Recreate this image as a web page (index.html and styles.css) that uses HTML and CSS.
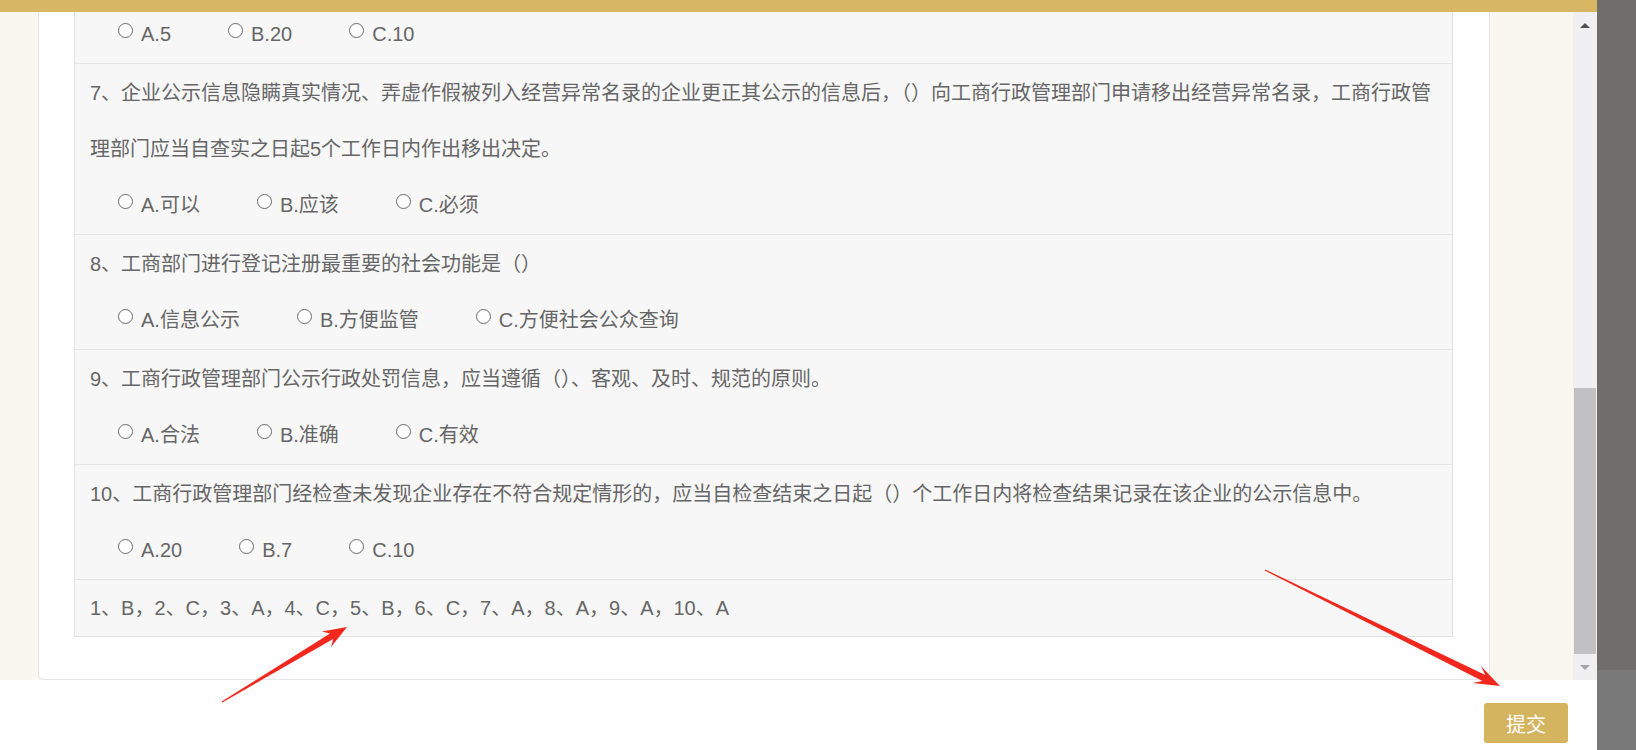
FILE: index.html
```html
<!DOCTYPE html>
<html lang="zh-CN">
<head>
    <meta charset="UTF-8">
    <meta name="viewport" content="width=device-width, initial-scale=1.0">
    <title>在线答题 - 提交</title>
    <link rel="stylesheet" href="styles.css">
</head>
<body>
    <div class="page">
        <div class="dialog">
            <div class="dialog-top"></div>

            <div class="dialog-body">
                <div class="scroll-view">
                    <div class="paper">
                        <div class="question-table">
                            <div class="q-row">
                                <div class="q-options">
                                    <label class="q-option"><input type="radio" name="q6">A.5</label><label class="q-option"><input type="radio" name="q6">B.20</label><label class="q-option"><input type="radio" name="q6">C.10</label>
                                </div>
                            </div>

                            <div class="q-row">
                                <p class="q-stem">7、企业公示信息隐瞒真实情况、弄虚作假被列入经营异常名录的企业更正其公示的信息后，（）向工商行政管理部门申请移出经营异常名录，工商行政管理部门应当自查实之日起5个工作日内作出移出决定。</p>
                                <div class="q-options">
                                    <label class="q-option"><input type="radio" name="q7">A.可以</label><label class="q-option"><input type="radio" name="q7">B.应该</label><label class="q-option"><input type="radio" name="q7">C.必须</label>
                                </div>
                            </div>

                            <div class="q-row">
                                <p class="q-stem">8、工商部门进行登记注册最重要的社会功能是（）</p>
                                <div class="q-options">
                                    <label class="q-option"><input type="radio" name="q8">A.信息公示</label><label class="q-option"><input type="radio" name="q8">B.方便监管</label><label class="q-option"><input type="radio" name="q8">C.方便社会公众查询</label>
                                </div>
                            </div>

                            <div class="q-row">
                                <p class="q-stem">9、工商行政管理部门公示行政处罚信息，应当遵循（）、客观、及时、规范的原则。</p>
                                <div class="q-options">
                                    <label class="q-option"><input type="radio" name="q9">A.合法</label><label class="q-option"><input type="radio" name="q9">B.准确</label><label class="q-option"><input type="radio" name="q9">C.有效</label>
                                </div>
                            </div>

                            <div class="q-row">
                                <p class="q-stem">10、工商行政管理部门经检查未发现企业存在不符合规定情形的，应当自检查结束之日起（）个工作日内将检查结果记录在该企业的公示信息中。</p>
                                <div class="q-options">
                                    <label class="q-option"><input type="radio" name="q10">A.20</label><label class="q-option"><input type="radio" name="q10">B.7</label><label class="q-option"><input type="radio" name="q10">C.10</label>
                                </div>
                            </div>

                            <div class="q-row answer-row">1、B，2、C，3、A，4、C，5、B，6、C，7、A，8、A，9、A，10、A</div>
                        </div>
                    </div>
                </div>

                <div class="scrollbar">
                    <span class="scroll-arrow up"></span>
                    <div class="scroll-track">
                        <div class="scroll-thumb"></div>
                    </div>
                    <span class="scroll-arrow down"></span>
                </div>
            </div>

            <div class="dialog-footer">
                <button type="button" class="submit-button">提交</button>
            </div>
        </div>

        <div class="backdrop-edge">
            <div class="edge-top"></div>
            <div class="edge-bottom"></div>
        </div>

        <!-- 标注箭头 -->
        <svg class="annotations" width="1636" height="750" viewBox="0 0 1636 750">
            <polygon points="222.3,702.5 333.2,639 331,647 347,627 321.8,631.6 330,633.6 221.7,701.5" fill="#f2281e"/>
            <polygon points="1264.7,570.5 1482.5,680.9 1472.5,683 1500,686 1480.9,666 1485.3,675.1 1265.3,569.5" fill="#f2281e"/>
        </svg>
    </div>
</body>
</html>
```

FILE: styles.css
```css
* {
    margin: 0;
    padding: 0;
    box-sizing: border-box;
}

body {
    font-family: "Liberation Sans", "Noto Sans CJK SC", sans-serif;
    background-color: #6f6e6a;
    width: 1636px;
    height: 750px;
    overflow: hidden;
}

.page {
    position: relative;
    display: flex;
    width: 1636px;
    height: 750px;
}

.dialog {
    width: 1597px;
    height: 750px;
    display: flex;
    flex-direction: column;
    background-color: white;
}

.dialog-top {
    height: 12px;
    background-color: #d7b763;
}

.dialog-body {
    height: 668px;
    display: flex;
}

.scroll-view {
    flex: 1;
    display: flex;
    flex-direction: column;
    justify-content: flex-end;
    overflow: hidden;
    background-color: #faf7f0;
    padding: 0 83px 0 38px;
}

.paper {
    flex-shrink: 0;
    background: white;
    border: 1px solid #e6e6e6;
    border-top: none;
    border-radius: 0 0 6px 6px;
    padding: 0 36px 42px 35px;
}

.question-table {
    border: 1px solid #e2e2e2;
    border-top: none;
    background-color: #f7f7f7;
    font-size: 20px;
    line-height: 56px;
    color: #666;
}

.q-row {
    border-top: 1px solid #e4e4e4;
    padding: 1px 6px 1px 15px;
}

.q-options {
    padding-left: 28px;
}

.q-option {
    display: inline-block;
    margin-right: 57px;
    cursor: pointer;
}

.q-option input {
    appearance: none;
    -webkit-appearance: none;
    width: 15px;
    height: 15px;
    border: 1px solid #6a6a6a;
    border-radius: 50%;
    background: white;
    margin: 0 8px 3px 0;
    vertical-align: baseline;
}

.answer-row {
    padding: 0 6px 0 15px;
}

.scrollbar {
    width: 24px;
    display: flex;
    flex-direction: column;
    background-color: #f0f0f0;
}

.scroll-arrow {
    height: 26px;
    display: flex;
    align-items: center;
    justify-content: center;
}

.scroll-arrow.up::before {
    content: "";
    border-left: 5px solid transparent;
    border-right: 5px solid transparent;
    border-bottom: 5px solid #505050;
}

.scroll-arrow.down::before {
    content: "";
    border-left: 5px solid transparent;
    border-right: 5px solid transparent;
    border-top: 5px solid #a3a3a3;
}

.scroll-track {
    flex: 1;
    padding: 0 1px;
}

.scroll-thumb {
    margin-top: 350px;
    height: 266px;
    background-color: #c1c1c1;
}

.dialog-footer {
    height: 70px;
    display: flex;
    justify-content: flex-end;
    align-items: flex-start;
    padding: 23px 29px 0 0;
    background-color: white;
}

.submit-button {
    width: 84px;
    height: 40px;
    border: none;
    border-radius: 3px;
    background-color: #d5b45f;
    color: white;
    font-family: "Noto Sans CJK SC", sans-serif;
    font-size: 20px;
    cursor: pointer;
}

.backdrop-edge {
    flex: 1;
    display: flex;
    flex-direction: column;
}

.edge-top {
    height: 670px;
    background-color: #6f6e6a;
}

.edge-bottom {
    flex: 1;
    background-color: #797979;
}

.annotations {
    position: absolute;
    left: 0;
    top: 0;
    pointer-events: none;
}
```
